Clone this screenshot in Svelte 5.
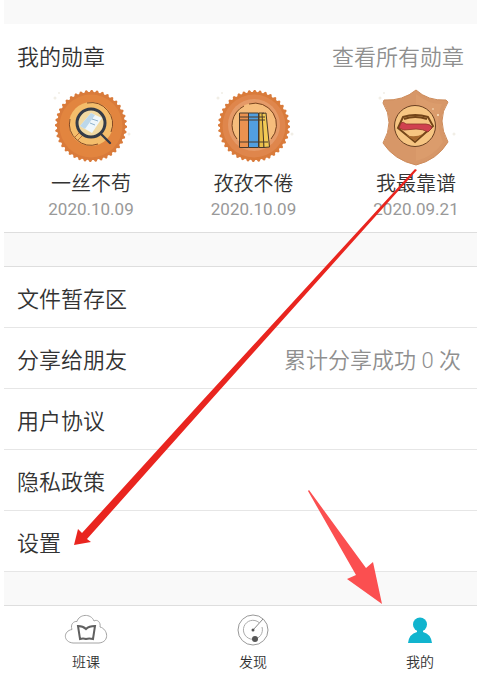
<script>
    const medals = [
        { name: "一丝不苟", date: "2020.10.09", kind: "search" },
        { name: "孜孜不倦", date: "2020.10.09", kind: "books" },
        { name: "我最靠谱", date: "2020.09.21", kind: "shield" },
    ];

    const rows = [
        { label: "文件暂存区", note: "" },
        { label: "分享给朋友", note: "累计分享成功 0 次" },
        { label: "用户协议", note: "" },
        { label: "隐私政策", note: "" },
        { label: "设置", note: "" },
    ];

    const tabs = [
        { id: "class", label: "班课" },
        { id: "explore", label: "发现" },
        { id: "me", label: "我的" },
    ];

    let active = "me";

    // toothed rim of the round medals
    function rim(teeth) {
        const points = [];
        for (let i = 0; i < teeth * 4; i++) {
            const a = (i / (teeth * 4)) * Math.PI * 2;
            const r = i % 4 < 2 ? 36 : 34;
            points.push((40 + r * Math.cos(a)).toFixed(1) + "," + (40 + r * Math.sin(a)).toFixed(1));
        }
        return points.join(" ");
    }

    const rimPoints = rim(40);
</script>

<div class="page">
    <div class="gap top"></div>

    <section class="medals">
        <header>
            <h2>我的勋章</h2>
            <a href="#medals">查看所有勋章</a>
        </header>

        <ul>
            {#each medals as medal}
                <li>
                    <svg viewBox="0 0 80 80" aria-hidden="true">
                        <g fill="#f1eee6">
                            <circle cx="4" cy="12" r="1.5" />
                            <circle cx="8" cy="7" r="1" />
                            <circle cx="78" cy="48" r="1.5" />
                        </g>
                        {#if medal.kind === "shield"}
                            <path d="M40 4Q52 15 70 14L72 16Q60 34 72 56Q61 74 40 79Q18 74 7 57Q19 36 7 17L8 14Q27 15 40 4Z" fill="#d79768" stroke="#cd8b5a" />
                            <path d="M40 8Q52 18 66 18Q58 36 67 56Q57 71 40 75Z" fill="#dda06f" opacity=".6" />
                            <circle cx="39" cy="40" r="20.5" fill="#f6c582" stroke="#6a4022" />
                            <path d="M27 31Q39 27 52 31L57 40L39 56L22 42Z" fill="#f6c582" stroke="#744518" stroke-width="2" />
                            <path d="M28 33Q39 29 51 33" fill="none" stroke="#744518" stroke-width="2" />
                            <path d="M25 37Q27 35 30 38H50Q55 38 56 42L52 46Q47 43 40 43L28 44L23 42Z" fill="#d0414f" stroke="#8f3328" stroke-width=".8" />
                            <path d="M30 49Q39 52 47 48L39 55Z" fill="#a86a30" />
                            <circle cx="62" cy="29" r="1" fill="#fbe6c5" />
                            <circle cx="57" cy="23" r=".8" fill="#fbe6c5" />
                        {:else}
                            <polygon points={rimPoints} fill="#d97b3b" />
                            <circle cx="40" cy="40" r="31.5" fill={medal.kind === "search" ? "#e2853f" : "#df864c"} />
                            {#if medal.kind === "search"}
                                <circle cx="40" cy="38" r="22" fill="#f4bd6b" />
                                <path d="M36 17A21.5 21.5 0 0 1 60 46M19 33A21.5 21.5 0 0 0 47 58" fill="none" stroke="#854a25" />
                                <path d="M23 52L29 46M26 55L32 49" stroke="#b86b36" />
                                <circle cx="40" cy="37" r="14" fill="#f1d9a2" stroke="#353c48" stroke-width="3" />
                                <path d="M29 40L40 27L51 32L41 47Z" fill="#eef6fb" />
                                <path d="M29 40L34 43L44 29L40 27Z" fill="#bcd7ea" />
                                <path d="M41 33L47 35M39 37L44 39" stroke="#8fb2cc" />
                                <path d="M50 48L59 57" stroke="#353c48" stroke-width="2.4" stroke-linecap="round" />
                            {:else}
                                <circle cx="40" cy="39" r="26" fill="#e59a68" />
                                <circle cx="40" cy="39" r="22" fill="#f6bd7c" />
                                <path d="M35 18A21.5 21.5 0 0 1 57 53M30 20A21.5 21.5 0 0 0 23 53" fill="none" stroke="#79441f" />
                                <g stroke="#4b3a2a">
                                    <path d="M25.5 27H34.5V61.5H25.5Z" fill="#ea9250" />
                                    <path d="M34.5 27H44.5V61.5H34.5Z" fill="#529fe0" />
                                    <path d="M45 27H50V61.5H45Z" fill="#e7bd49" />
                                    <path d="M48 27.5L52 27L55.5 61L50 61.5Z" fill="#f2cb55" />
                                    <path d="M25.5 31H51M25.5 34H51M25.5 56H54" />
                                </g>
                            {/if}
                        {/if}
                    </svg>
                    <span class="name">{medal.name}</span>
                    <time>{medal.date}</time>
                </li>
            {/each}
        </ul>
    </section>

    <div class="gap"></div>

    <div class="menu">
        {#each rows as row}
            <button>
                <span>{row.label}</span>
                {#if row.note}
                    <span class="note">{row.note}</span>
                {/if}
            </button>
        {/each}
    </div>

    <div class="gap"></div>

    <nav>
        {#each tabs as tab}
            <button aria-current={active === tab.id ? "page" : undefined} on:click={() => (active = tab.id)}>
                <svg viewBox="0 0 44 34" aria-hidden="true">
                    {#if tab.id === "class"}
                        <path d="M9 31C-1 30 -1 19 8 17.5C6 12 10 9 13 9.5C15 2 27 1 30 9C33 7 37 10 36 15C44 17 46 30 35 31Z" fill="#fff" stroke="#a4a4a4" />
                        <path d="M14 14Q19 14 22 17Q25 14 31 14L29 27Q25 26 22 27Q19 26 16 27Z" fill="#fff" stroke="#606060" stroke-width="2" />
                    {:else if tab.id === "explore"}
                        <circle cx="22" cy="18" r="15" fill="#fff" stroke="#999" />
                        <path d="M28 10.5A9.5 9.5 0 1 0 31 15" fill="none" stroke="#aaa" />
                        <path d="M22 18L32 7" stroke="#888" />
                        <circle cx="22" cy="18" r="1.5" fill="#555" />
                        <circle cx="24" cy="27" r="3" fill="#555" />
                    {:else}
                        <circle cx="22" cy="12.5" r="7" fill="#11b4ce" />
                        <path d="M19 17H25V20Q33 22 34 31H10Q11 22 19 20Z" fill="#11b4ce" />
                    {/if}
                </svg>
                {tab.label}
            </button>
        {/each}
    </nav>

    <svg class="arrows" width="477" height="684" viewBox="0 0 477 684" aria-hidden="true">
        <path d="M415 169L417 170L210 401L87 539L91 542L74 545L78 529L82 533L203 400Z" fill="#e9251f" />
        <path d="M309 490L366 568L373 562L382 604L347 579L356 575L308 491Z" fill="#fb4f50" />
    </svg>
</div>

<style>
    :global(body) {
        margin: 0;
        background: #fff;
    }

    .page {
        position: relative;
        padding-left: 4px;
        overflow: hidden;
        color: #333;
        font-family: Roboto, "Noto Sans CJK SC", sans-serif;
        font-size: 22px;
        font-weight: 350;
    }

    .gap {
        height: 33px;
        background: #f9f9f9;
        border-bottom: 1px solid #dedede;
    }

    .gap.top {
        height: 24px;
        border-bottom: 0;
    }

    .medals {
        padding: 18px 13px 12px;
        border-bottom: 1px solid #dedede;
    }

    header {
        display: flex;
        justify-content: space-between;
        align-items: center;
        line-height: 32px;
    }

    h2 {
        margin: 0;
        font-size: 22px;
        font-weight: 350;
    }

    header a {
        color: #8f8f8f;
        text-decoration: none;
    }

    ul {
        display: flex;
        justify-content: space-between;
        margin: 0;
        padding: 12px 3px 0 29px;
        list-style: none;
    }

    li {
        display: flex;
        flex-direction: column;
        align-items: center;
        width: 90px;
    }

    li svg {
        width: 80px;
        height: 80px;
        margin-bottom: 4px;
    }

    .name {
        font-size: 20px;
        line-height: 28px;
    }

    time {
        color: #999;
        font-size: 17px;
        font-weight: 400;
        line-height: 22px;
    }

    button {
        border: 0;
        background: none;
        color: inherit;
        font: inherit;
        cursor: pointer;
    }

    .menu button {
        display: flex;
        justify-content: space-between;
        align-items: center;
        width: 100%;
        height: 61px;
        padding: 0 16px 0 13px;
        border-bottom: 1px solid #e6e6e6;
    }

    .note {
        color: #8f8f8f;
    }

    nav {
        display: flex;
        justify-content: space-between;
        padding: 6px 27px 10px 52px;
    }

    nav button {
        display: flex;
        flex-direction: column;
        align-items: center;
        width: 60px;
        padding: 0;
        font-size: 14px;
        line-height: 24px;
    }

    nav svg {
        width: 44px;
        height: 34px;
        margin-bottom: 4px;
    }

    .arrows {
        position: absolute;
        top: 0;
        left: 0;
        pointer-events: none;
    }
</style>
